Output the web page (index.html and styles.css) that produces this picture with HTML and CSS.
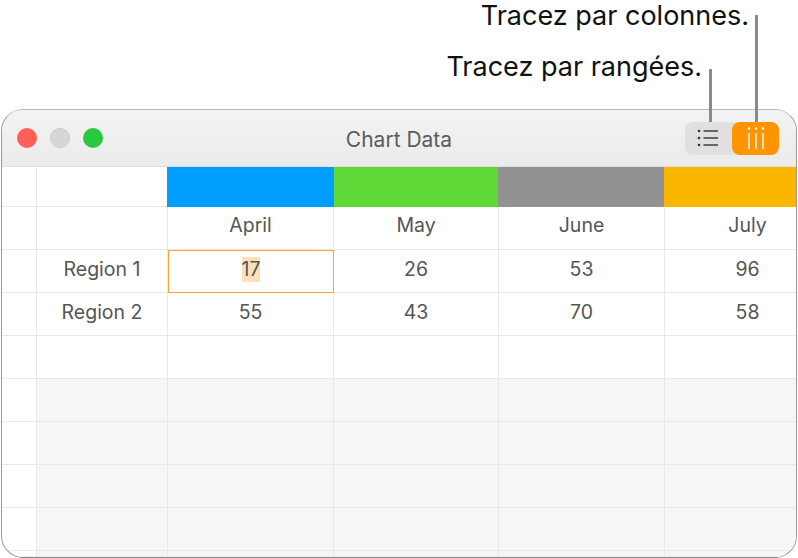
FILE: index.html
```html
<!DOCTYPE html>
<html lang="fr">
  <head>
    <meta charset="UTF-8" />
    <meta name="viewport" content="width=device-width, initial-scale=1.0" />
    <title>Chart Data</title>
    <link rel="stylesheet" href="styles.css">
  </head>
  <body>
    <div class="callouts">
      <div class="callout callout-columns">Tracez par colonnes.</div>
      <div class="callout callout-rows">Tracez par rangées.</div>
    </div>

    <div class="window">
      <div class="titlebar">
        <div class="lights">
          <span class="light red"></span>
          <span class="light gray"></span>
          <span class="light green"></span>
        </div>
        <div class="title">Chart Data</div>
        <div class="segment">
          <span class="lead lead-rows"></span>
          <span class="lead lead-columns"></span>
          <button class="seg-button">
            <svg width="24" height="20" viewBox="0 0 24 20">
              <g fill="#333">
                <circle cx="2" cy="3" r="1.3" />
                <circle cx="2" cy="10" r="1.3" />
                <circle cx="2" cy="17" r="1.3" />
              </g>
              <g stroke="#333" stroke-width="1.4">
                <path d="M6.5 3H21" />
                <path d="M6.5 10H21" />
                <path d="M6.5 17H21" />
              </g>
            </svg>
          </button>
          <button class="seg-button active">
            <svg width="20" height="24" viewBox="0 0 20 24">
              <g fill="#fff">
                <circle cx="3" cy="2.5" r="1.2" />
                <circle cx="10" cy="2.5" r="1.2" />
                <circle cx="17" cy="2.5" r="1.2" />
              </g>
              <g stroke="#fff" stroke-width="1.4">
                <path d="M3 7V23" />
                <path d="M10 7V23" />
                <path d="M17 7V23" />
              </g>
            </svg>
          </button>
        </div>
      </div>

      <div class="sheet">
        <!-- bandes de couleur -->
        <div class="cell"></div>
        <div class="cell"></div>
        <div class="cell swatch blue"></div>
        <div class="cell swatch lime"></div>
        <div class="cell swatch grey"></div>
        <div class="cell swatch amber"></div>

        <div class="cell"></div>
        <div class="cell"></div>
        <div class="cell head">April</div>
        <div class="cell head">May</div>
        <div class="cell head">June</div>
        <div class="cell head">July</div>

        <div class="cell"></div>
        <div class="cell">Region 1</div>
        <div class="cell selected"><span class="sel-text">17</span></div>
        <div class="cell">26</div>
        <div class="cell">53</div>
        <div class="cell">96</div>

        <div class="cell"></div>
        <div class="cell">Region 2</div>
        <div class="cell">55</div>
        <div class="cell">43</div>
        <div class="cell">70</div>
        <div class="cell">58</div>

        <div class="cell"></div>
        <div class="cell"></div>
        <div class="cell"></div>
        <div class="cell"></div>
        <div class="cell"></div>
        <div class="cell"></div>

        <div class="cell"></div>
        <div class="cell empty"></div>
        <div class="cell empty"></div>
        <div class="cell empty"></div>
        <div class="cell empty"></div>
        <div class="cell empty"></div>

        <div class="cell"></div>
        <div class="cell empty"></div>
        <div class="cell empty"></div>
        <div class="cell empty"></div>
        <div class="cell empty"></div>
        <div class="cell empty"></div>

        <div class="cell"></div>
        <div class="cell empty"></div>
        <div class="cell empty"></div>
        <div class="cell empty"></div>
        <div class="cell empty"></div>
        <div class="cell empty"></div>

        <div class="cell"></div>
        <div class="cell empty"></div>
        <div class="cell empty"></div>
        <div class="cell empty"></div>
        <div class="cell empty"></div>
        <div class="cell empty"></div>

        <div class="cell"></div>
        <div class="cell empty"></div>
        <div class="cell empty"></div>
        <div class="cell empty"></div>
        <div class="cell empty"></div>
        <div class="cell empty"></div>
      </div>
    </div>
  </body>
</html>
```

FILE: styles.css
```css
html,
body {
  height: 100%;
}
body {
  margin: 0;
  background-color: white;
  font-family: Inter, "Liberation Sans", sans-serif;
  overflow: hidden;
}
.callouts {
  height: 109px;
  position: relative;
  color: #111;
  font-size: 27px;
  line-height: 32px;
}
.callout {
  position: absolute;
  white-space: nowrap;
}
.callout-columns {
  right: 49px;
  top: 0;
}
.callout-rows {
  right: 96px;
  top: 51px;
}
.window {
  width: 796px;
  height: 449px;
  margin-left: 1px;
  box-sizing: border-box;
  border: 1px solid #9a9a9a;
  border-top-color: #b8b8b8;
  border-bottom-color: #8f8f8f;
  border-radius: 22px;
  background-color: white;
}
.titlebar {
  height: 57px;
  box-sizing: border-box;
  display: flex;
  align-items: center;
  padding: 0 17px 0 15px;
  position: relative;
  background: linear-gradient(#f3f3f3, #ebebeb);
  border-bottom: 1px solid #dedede;
  border-radius: 21px 21px 0 0;
}
.lights {
  display: flex;
  gap: 13px;
}
.light {
  width: 20px;
  height: 20px;
  border-radius: 50%;
  box-sizing: border-box;
}
.light.red {
  background-color: #ff5f57;
}
.light.gray {
  background-color: #d6d6d6;
  border: 1px solid #cbcbcb;
}
.light.green {
  background-color: #28c840;
}
.title {
  position: absolute;
  left: 0;
  right: 0;
  top: 17px;
  text-align: center;
  font-size: 21px;
  line-height: 26px;
  color: #5c5c5c;
}
.segment {
  margin-left: auto;
  display: flex;
  background-color: #e0e0e0;
  border-radius: 8px;
  height: 33px;
  position: relative;
}
.seg-button {
  width: 47px;
  height: 33px;
  padding: 0;
  border: none;
  border-radius: 8px;
  background: none;
  display: flex;
  justify-content: center;
  align-items: center;
}
.seg-button.active {
  background-color: #fd9400;
}
.lead {
  position: absolute;
  width: 3px;
  bottom: 33px;
  background-color: #8a8a8a;
}
.lead-rows {
  left: 24px;
  height: 53px;
}
.lead-columns {
  left: 70px;
  height: 107px;
}
.sheet {
  display: grid;
  grid-template-columns: 35px 131px 166px 165px 166px 166px;
  grid-template-rows: 40px repeat(8, 43px) 6px;
  height: 390px;
  overflow: hidden;
  border-radius: 0 0 21px 21px;
  color: #555;
  font-size: 19.5px;
}
.cell {
  box-sizing: border-box;
  padding-bottom: 4px;
  border-right: 1px solid #e8e8e8;
  border-bottom: 1px solid #e8e8e8;
  display: flex;
  justify-content: center;
  align-items: center;
}
.cell.head {
  padding-bottom: 6px;
}
.cell.empty {
  background-color: #f6f6f6;
}
.swatch {
  border: none;
  margin-left: -1px;
}
.swatch.lime {
  margin-left: 0;
}
.blue {
  background-color: #009eff;
}
.lime {
  background-color: #60d938;
}
.grey {
  background-color: #929292;
}
.amber {
  background-color: #fbb700;
}
.selected {
  border: 1px solid #f8a52f;
}
.sel-text {
  background-color: #fddfb8;
  line-height: 25px;
}
```
